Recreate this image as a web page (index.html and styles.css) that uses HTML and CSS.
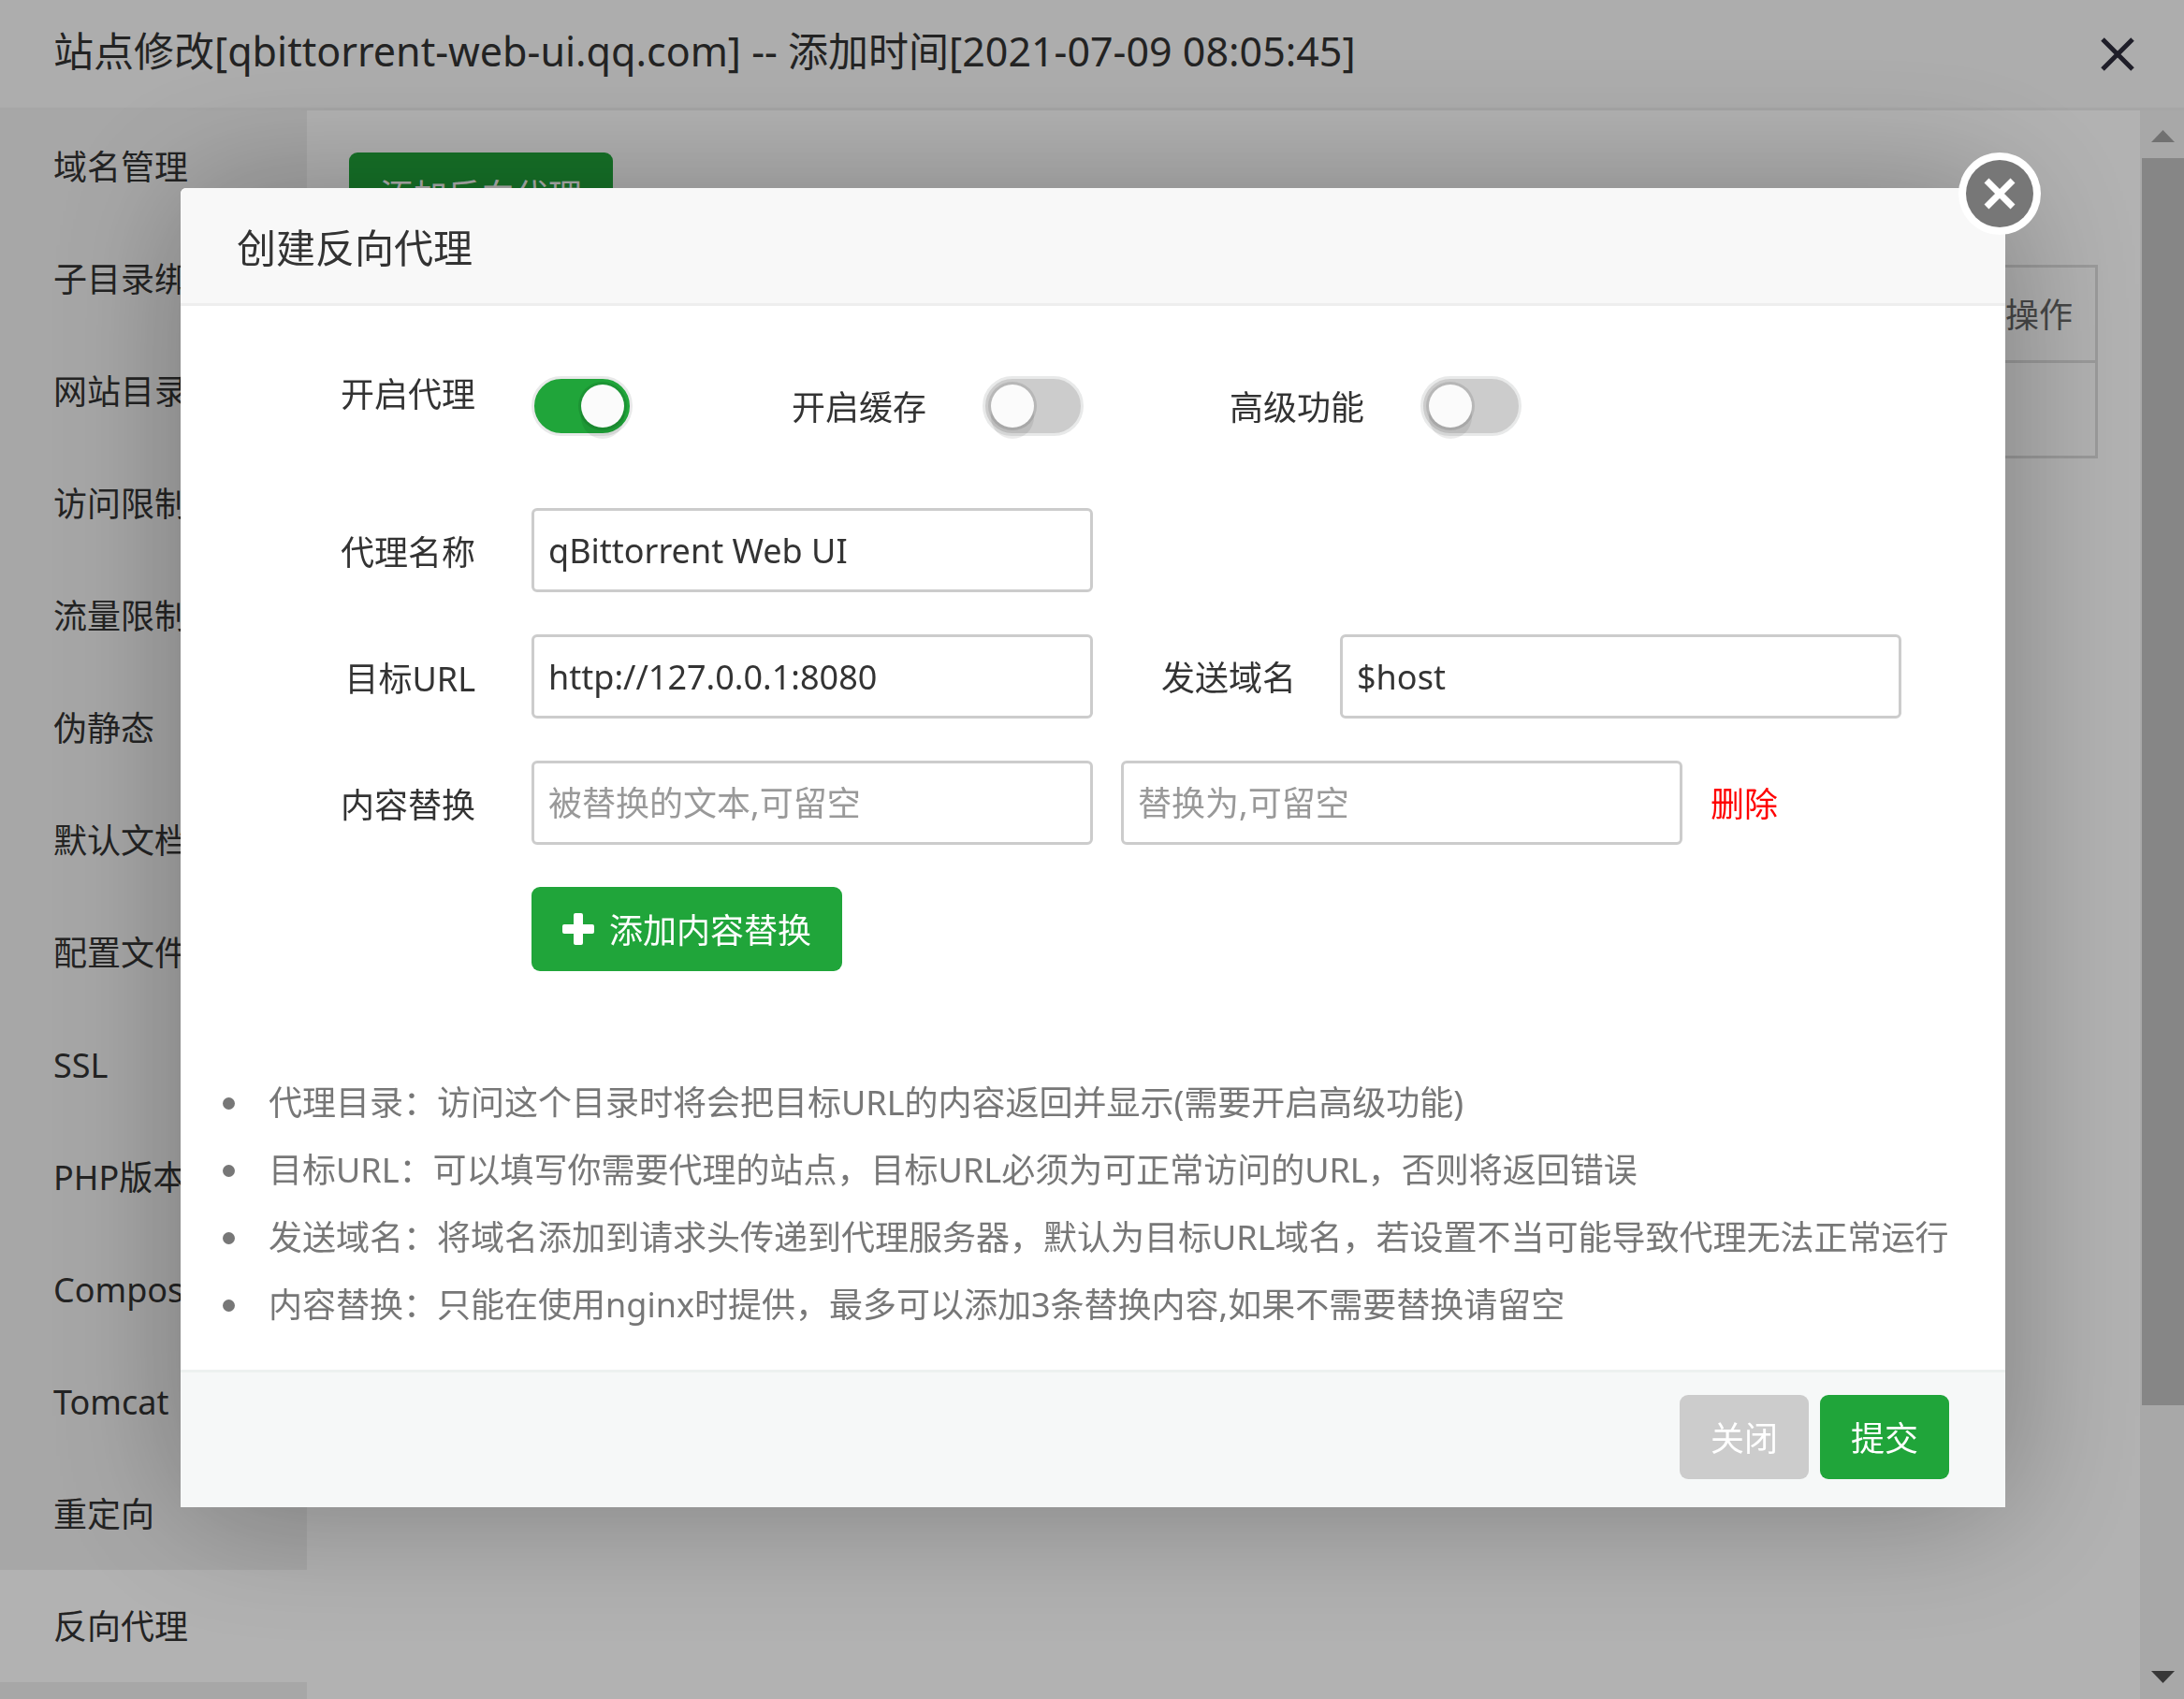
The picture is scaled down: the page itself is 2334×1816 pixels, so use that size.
FILE: index.html
```html
<!DOCTYPE html>
<html lang="zh-CN">
<head>
<meta charset="utf-8">
<meta name="viewport" content="width=device-width, initial-scale=1">
<title>站点修改</title>
<link rel="stylesheet" href="styles.css">
</head>
<body>
<div class="window">
  <header class="window-header">
    <h1 class="window-title">站点修改[qbittorrent-web-ui.qq.com] -- 添加时间[2021-07-09 08:05:45]</h1>
    <button class="window-close" type="button" aria-label="关闭窗口">
      <svg width="40" height="40" viewBox="0 0 40 40"><path d="M4 4L36 36M36 4L4 36" fill="none" stroke="#2d2c3b" stroke-width="5"/></svg>
    </button>
  </header>
  <div class="window-body">
    <nav class="side">
      <a href="#">域名管理</a>
      <a href="#">子目录绑定</a>
      <a href="#">网站目录</a>
      <a href="#">访问限制</a>
      <a href="#">流量限制</a>
      <a href="#">伪静态</a>
      <a href="#">默认文档</a>
      <a href="#">配置文件</a>
      <a href="#">SSL</a>
      <a href="#">PHP版本</a>
      <a href="#">Composer</a>
      <a href="#">Tomcat</a>
      <a href="#">重定向</a>
      <a href="#" class="active">反向代理</a>
    </nav>
    <main class="content">
      <button class="btn btn-primary" type="button">添加反向代理</button>
      <table class="proxy-table">
        <thead><tr><th>操作</th></tr></thead>
        <tbody><tr><td></td></tr></tbody>
      </table>
    </main>
    <div class="scrollbar" aria-hidden="true">
      <div class="scroll-arrow"><svg width="25" height="13" viewBox="0 0 25 13"><path d="M0 13L12.500 0L25 13Z" fill="#a3a3a3"/></svg></div>
      <div class="scroll-thumb"></div>
      <div class="scroll-rest"></div>
      <div class="scroll-arrow"><svg width="25" height="13" viewBox="0 0 25 13"><path d="M0 0L12.500 13L25 0Z" fill="#505050"/></svg></div>
    </div>
  </div>
</div>

<div class="overlay">
  <form class="modal" role="dialog" aria-labelledby="modal-title">
    <button class="modal-close" type="button" aria-label="关闭">
      <svg width="90" height="90" viewBox="0 0 90 90"><circle cx="45" cy="45" r="44" fill="#fff"/><circle cx="45" cy="45" r="36" fill="#777"/><path d="M31 31L59 59M59 31L31 59" fill="none" stroke="#fff" stroke-width="7"/></svg>
    </button>
    <header class="modal-header"><h2 id="modal-title">创建反向代理</h2></header>
    <div class="modal-body">
      <div class="row row-switches">
        <label class="row-label" for="sw-proxy">开启代理</label>
        <input class="switch" id="sw-proxy" type="checkbox" checked>
        <label class="switch-label" for="sw-cache">开启缓存</label>
        <input class="switch" id="sw-cache" type="checkbox">
        <label class="switch-label switch-label-adv" for="sw-adv">高级功能</label>
        <input class="switch" id="sw-adv" type="checkbox">
      </div>
      <div class="row">
        <label class="row-label" for="name">代理名称</label>
        <input class="field" id="name" type="text" value="qBittorrent Web UI">
      </div>
      <div class="row">
        <label class="row-label" for="url">目标URL</label>
        <input class="field" id="url" type="text" value="http://127.0.0.1:8080">
        <label class="host-label" for="host">发送域名</label>
        <input class="field" id="host" type="text" value="$host">
      </div>
      <div class="row">
        <label class="row-label" for="from">内容替换</label>
        <input class="field" id="from" type="text" placeholder="被替换的文本,可留空">
        <input class="field field-to" type="text" placeholder="替换为,可留空" aria-label="替换为">
        <a class="delete" href="#">删除</a>
      </div>
      <div class="row row-add">
        <button class="btn btn-primary" type="button"><svg width="34" height="34" viewBox="0 0 34 34"><path d="M12 2Q12 0 14 0H20Q22 0 22 2V12H32Q34 12 34 14V20Q34 22 32 22H22V32Q22 34 20 34H14Q12 34 12 32V22H2Q0 22 0 20V14Q0 12 2 12H12Z" fill="#fff"/></svg>添加内容替换</button>
      </div>
      <ul class="help">
        <li>代理目录：访问这个目录时将会把目标URL的内容返回并显示(需要开启高级功能)</li>
        <li>目标URL：可以填写你需要代理的站点，目标URL必须为可正常访问的URL，否则将返回错误</li>
        <li>发送域名：将域名添加到请求头传递到代理服务器，默认为目标URL域名，若设置不当可能导致代理无法正常运行</li>
        <li>内容替换：只能在使用nginx时提供，最多可以添加3条替换内容,如果不需要替换请留空</li>
      </ul>
    </div>
    <footer class="modal-footer">
      <button class="btn btn-muted" type="button">关闭</button>
      <button class="btn btn-primary" type="submit">提交</button>
    </footer>
  </form>
</div>
</body>
</html>
```
FILE: styles.css
```css
* { box-sizing: border-box; }

body {
  margin: 0;
  font-family: "Noto Sans", "Noto Sans CJK SC", sans-serif;
  font-size: 36px;
  line-height: 54px;
  color: #333;
  background: #fff;
}

button, input { font: inherit; color: inherit; }
button { border: 0; background: none; padding: 0; cursor: pointer; }
a { color: inherit; text-decoration: none; }
svg { display: block; flex: none; }

/* Site window behind the dialog */
.window {
  display: flex;
  flex-direction: column;
  height: 100vh;
  overflow: hidden;
}

.window-header {
  display: flex;
  align-items: center;
  justify-content: space-between;
  flex: none;
  height: 118px;
  padding: 0 51px 0 57px;
  background: #f8f8f8;
  border-bottom: 3px solid #eee;
}

.window-title { margin: 0; padding-bottom: 6px; font-size: 43px; font-weight: 400; }

.window-body { display: flex; flex: 1; min-height: 0; }

.side { flex: none; width: 328px; background: #f0f0f0; overflow: hidden; }
.side a {
  display: block;
  height: 120px;
  padding-left: 57px;
  line-height: 122px;
  white-space: nowrap;
}
.side .active { background: #fff; }

.content { flex: 1; padding: 45px; min-width: 0; }

.proxy-table {
  width: 100%;
  margin-top: 30px;
  border-collapse: collapse;
  border: 3px solid #ddd;
  color: #666;
}
.proxy-table th, .proxy-table td {
  height: 102px;
  padding: 3px 24px 0;
  border-bottom: 3px solid #ddd;
  font-weight: 400;
  text-align: right;
}

.scrollbar {
  display: flex;
  flex-direction: column;
  flex: none;
  width: 47px;
  padding-left: 2px;
  background: #f1f1f1;
}
.scroll-arrow { display: flex; align-items: center; justify-content: center; flex: none; height: 51px; padding-top: 3px; }
.scroll-thumb { flex: 81; background: #c1c1c1; }
.scroll-rest { flex: 16; }

/* Dialog */
.overlay {
  position: fixed;
  inset: 0;
  display: flex;
  align-items: flex-start;
  justify-content: center;
  padding: 201px 24px 0 26px;
  background: rgba(0, 0, 0, .3);
  overflow: hidden;
}

.modal {
  position: relative;
  width: 100%;
  max-width: 1950px;
  background: #fff;
  border-radius: 6px 6px 0 0;
  box-shadow: 3px 3px 150px rgba(0, 0, 0, .3);
}

.modal-close { position: absolute; top: -39px; right: -39px; }

.modal-header {
  padding: 37px 60px 32px;
  background: #f8f8f8;
  border-bottom: 3px solid #eee;
  border-radius: 6px 6px 0 0;
}
.modal-header h2 { margin: 0; font-size: 42px; font-weight: 400; }

.modal-body {
  display: flex;
  flex-direction: column;
  gap: 45px;
  padding: 75px 45px 33px 45px;
}

.row { display: flex; align-items: center; }
.row-label { flex: none; width: 270px; margin-right: 60px; padding-top: 6px; text-align: right; }
.row-switches { height: 96px; padding-bottom: 32px; }
.row-switches .row-label { padding: 0 0 24px; }
.switch-label { margin: 0 60px 0 170px; padding-top: 4px; }
.switch-label-adv { margin-left: 156px; }
.row-add { padding-left: 330px; }

.field {
  width: 600px;
  height: 90px;
  padding: 0 15px;
  border: 3px solid #ccc;
  border-radius: 6px;
  background: #fff;
}
.field::placeholder { color: #999; opacity: 1; }
.field-to { margin-left: 30px; }
.host-label { margin: 0 47px 0 73px; padding-top: 4px; }
.delete { margin-left: 30px; padding-top: 4px; color: #f00; }

.switch {
  appearance: none;
  flex: none;
  width: 108px;
  height: 64px;
  margin: 0;
  padding: 6px;
  border: 3px solid #e8e9e9;
  border-radius: 32px;
  background: #ccc;
}
.switch::before {
  content: "";
  display: block;
  width: 46px;
  height: 46px;
  border-radius: 50%;
  background: #fbfbfb;
  box-shadow: 0 0 0 3px rgba(0, 0, 0, .1), 0 12px 0 rgba(0, 0, 0, .08);
}
.switch:checked { background: #20a53a; }
.switch:checked::before { margin-left: auto; }

.btn {
  display: inline-flex;
  align-items: center;
  gap: 16px;
  height: 90px;
  padding: 4px 33px 0;
  border-radius: 9px;
  color: #fff;
}
.btn svg { margin-top: -4px; }
.btn-primary { background: #20a53a; }
.btn-muted { background: #ccc; }

.help { margin: 60px 0 0; padding: 0; list-style: none; color: #777; }
.help li { display: flex; align-items: center; height: 72px; white-space: nowrap; }
.help li::before {
  content: "";
  flex: none;
  width: 13px;
  height: 13px;
  margin-right: 36px;
  border-radius: 50%;
  background: #777;
}

.modal-footer {
  display: flex;
  justify-content: flex-end;
  gap: 12px;
  padding: 24px 60px 30px;
  background: #f6f8f8;
  border-top: 3px solid #edf1f0;
}
```
